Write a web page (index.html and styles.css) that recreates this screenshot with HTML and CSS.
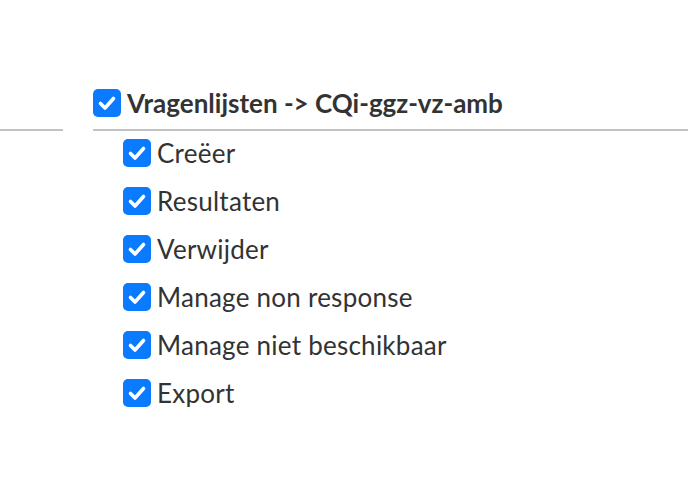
FILE: index.html
```html
<!DOCTYPE html>
<html lang="nl">
<head>
<meta charset="utf-8">
<link rel="stylesheet" href="styles.css">
</head>
<body>
<div class="tree">
  <div class="head-row">
    <div class="stub"></div>
    <div class="head">
      <label class="item item-head">
        <span class="cb"><svg viewBox="0 0 28 28"><path d="M7.5 14.5 L12 19 L20.5 9.5" /></svg></span>
        <span class="label">Vragenlijsten -&gt; CQi-ggz-vz-amb</span>
      </label>
    </div>
  </div>
  <ul class="children">
    <li class="item"><span class="cb"><svg viewBox="0 0 28 28"><path d="M7.5 14.5 L12 19 L20.5 9.5" /></svg></span><span class="label">Creëer</span></li>
    <li class="item"><span class="cb"><svg viewBox="0 0 28 28"><path d="M7.5 14.5 L12 19 L20.5 9.5" /></svg></span><span class="label">Resultaten</span></li>
    <li class="item"><span class="cb"><svg viewBox="0 0 28 28"><path d="M7.5 14.5 L12 19 L20.5 9.5" /></svg></span><span class="label">Verwijder</span></li>
    <li class="item"><span class="cb"><svg viewBox="0 0 28 28"><path d="M7.5 14.5 L12 19 L20.5 9.5" /></svg></span><span class="label">Manage non response</span></li>
    <li class="item"><span class="cb"><svg viewBox="0 0 28 28"><path d="M7.5 14.5 L12 19 L20.5 9.5" /></svg></span><span class="label">Manage niet beschikbaar</span></li>
    <li class="item"><span class="cb"><svg viewBox="0 0 28 28"><path d="M7.5 14.5 L12 19 L20.5 9.5" /></svg></span><span class="label">Export</span></li>
  </ul>
</div>
</body>
</html>
```
FILE: styles.css
```css
html, body {
  margin: 0;
  padding: 0;
  background: #ffffff;
}
body {
  font-family: "Lato", "Open Sans", sans-serif;
  color: #333333;
}
.tree {
  padding-top: 89px;
}
.head-row {
  display: flex;
  align-items: flex-end;
  gap: 30px;
}
.stub {
  width: 63px;
  border-bottom: 2px solid #c2c2c2;
}
.head {
  flex: 1;
  border-bottom: 2px solid #c2c2c2;
  padding-bottom: 12px;
}
.item {
  display: flex;
  align-items: center;
  gap: 6px;
  height: 28px;
}
.item-head .label {
  font-weight: 700;
  font-size: 26px;
}
.cb {
  width: 28px;
  height: 28px;
  border-radius: 5px;
  background: #0a7bff;
  display: flex;
  flex: none;
}
.cb svg {
  width: 28px;
  height: 28px;
  fill: none;
  stroke: #ffffff;
  stroke-width: 3.6;
  stroke-linecap: round;
  stroke-linejoin: round;
}
.children {
  list-style: none;
  margin: 0;
  padding: 8px 0 0 123px;
  display: flex;
  flex-direction: column;
  gap: 20px;
}
.children .label {
  font-size: 26px;
  letter-spacing: 0.25px;
}
```
